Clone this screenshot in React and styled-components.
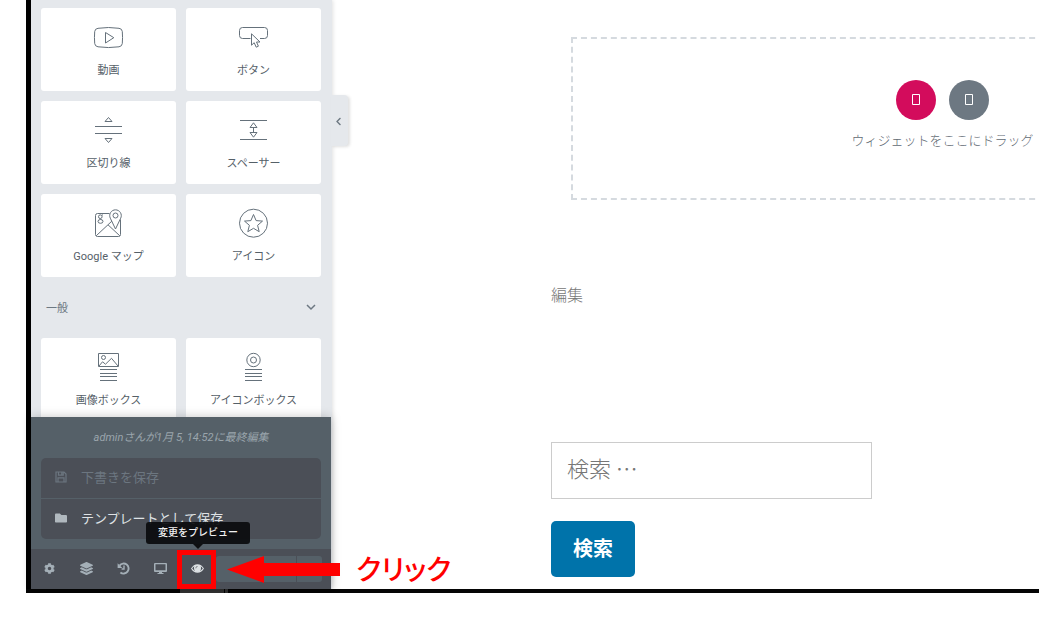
import React from "react";
import styled, { createGlobalStyle, css } from "styled-components";
import { FaCog, FaLayerGroup, FaFolder, FaChevronLeft } from "react-icons/fa";

const GlobalStyle = createGlobalStyle`
  *, *::before, *::after { box-sizing: border-box; }
  body {
    margin: 0;
    background: #fff;
    overflow: hidden;
    font-family: Roboto, "Noto Sans CJK JP", sans-serif;
  }
  button, input { font: inherit; }
`;

const Window = styled.div`
  display: flex;
  flex-direction: column;
  height: calc(100vh - 34px);
  margin-left: 26px;
  border-left: 5px solid #000;
`;

const Editor = styled.div`
  flex: 1;
  min-height: 0;
  display: flex;
`;

const Panel = styled.aside`
  position: relative;
  z-index: 1;
  flex: none;
  width: 300px;
  display: flex;
  flex-direction: column;
  background: #e5e8ec;
  box-shadow: 1px 0 0 #e5e8ec, 2px 0 4px rgba(0, 0, 0, 0.12);
`;

const Widgets = styled.div`
  flex: 1;
  min-height: 0;
  overflow: hidden;
  padding: 8px 10px 0;
`;

const WidgetGrid = styled.div`
  display: grid;
  grid-template-columns: 1fr 1fr;
  gap: 10px;
`;

const Card = styled.button`
  height: 83px;
  padding: 14px 0 0;
  border: 0;
  border-radius: 3px;
  background: #fff;
  color: #556068;
  display: flex;
  flex-direction: column;
  align-items: center;
  gap: 10px;
  font-size: 11px;
  line-height: 16px;
`;

const Drawing = styled.svg`
  display: block;
  width: 31px;
  height: 31px;
  fill: none;
  stroke: #65717b;
  stroke-width: 1;
`;

const CategoryTitle = styled.button`
  width: 100%;
  height: 61px;
  padding: 0 5px 2px;
  border: 0;
  background: none;
  color: #6d7882;
  display: flex;
  align-items: center;
  justify-content: space-between;
  font-size: 11px;
`;

const Footer = styled.footer`
  position: relative;
  background: #4b4f57;
  box-shadow: 0 0 10px rgba(0, 0, 0, 0.22);
`;

const SaveMenu = styled.div`
  padding: 11px 10px 10px;
  background: #556068;
`;

const LastEdited = styled.p`
  margin: 0 0 10px;
  color: #9aa5ac;
  font-size: 11px;
  font-style: italic;
  line-height: 20px;
  text-align: center;
`;

const MenuList = styled.div`
  display: flex;
  flex-direction: column;
  gap: 1px;
  border-radius: 5px;
  overflow: hidden;
`;

const MenuItem = styled.button`
  height: 40px;
  padding: 0 14px 3px;
  border: 0;
  background: #4b4f57;
  color: ${(p) => (p.disabled ? "#6c7680" : "#dfe2e5")};
  display: flex;
  align-items: center;
  gap: 14px;
  font-size: 13px;
  text-align: left;

  svg {
    width: 12px;
    height: 12px;
    color: ${(p) => (p.disabled ? "#6c7680" : "#b0b8be")};
  }
`;

const Tools = styled.div`
  height: 40px;
  padding-right: 9px;
  display: flex;
  align-items: center;
`;

const ToolButton = styled.button`
  position: relative;
  flex: none;
  width: 37px;
  height: 40px;
  padding: 0 0 1px;
  border: 0;
  background: none;
  color: ${(p) => (p.$active ? "#dde1e4" : "#a4afb7")};
  display: grid;
  place-items: center;

  > svg { width: 13px; height: 13px; }
  > ${() => SmallIcon} { width: 11px; height: 11px; }
`;

const SmallIcon = styled(FaCog)`
  display: block;
`;

const publishPart = css`
  height: 26px;
  border: 0;
  background: #556068;
`;

const Publish = styled.button`
  ${publishPart}
  flex: 1;
  border-radius: 3px 0 0 3px;
`;

const PublishOptions = styled.button`
  ${publishPart}
  width: 25px;
  margin-left: 1px;
  border-radius: 0 3px 3px 0;
`;

const Tooltip = styled.span`
  position: absolute;
  bottom: 45px;
  left: -33px;
  width: 104px;
  border-radius: 3px;
  background: rgba(10, 11, 13, 0.92);
  color: #f1f1f1;
  font-size: 10px;
  font-weight: 500;
  line-height: 22px;
  text-align: center;

  &::after {
    content: "";
    position: absolute;
    top: 100%;
    left: 47px;
    border: 5px solid transparent;
    border-top-color: #0e0f11;
    border-bottom: 0;
  }
`;

const Highlight = styled.span`
  position: absolute;
  inset: 1px 0 0 -2px;
  border: 5px solid #f00;
`;

const Callout = styled.div`
  position: absolute;
  z-index: 2;
  left: 196px;
  bottom: 0;
  height: 40px;
  display: flex;
  align-items: center;
  gap: 16px;
  color: #f00;
  font-size: 28px;
  font-weight: 500;
  line-height: 40px;
  font-feature-settings: "palt";
  white-space: nowrap;
  pointer-events: none;

  svg { display: block; fill: currentColor; }
  span { padding-top: 3px; }
`;

const CollapseHandle = styled.button`
  position: absolute;
  top: 95px;
  left: 100%;
  width: 17px;
  height: 51px;
  padding: 1px 2px 0 0;
  border: 0;
  border-radius: 0 4px 4px 0;
  background: #e5e8ec;
  box-shadow: 2px 1px 3px rgba(0, 0, 0, 0.12);
  color: #6d7882;
  display: grid;
  place-items: center;
`;

const Canvas = styled.main`
  flex: 1;
  min-width: 0;
  overflow: hidden;
  padding: 37px 0 0 220px;
`;

const Section = styled.section`
  width: 783px;
  padding: 0 20px;
`;

const DropZone = styled.div`
  height: 163px;
  border: 2px dashed #d5dadf;
  display: flex;
  flex-direction: column;
  align-items: center;
  padding-top: 41px;
  gap: 10px;
  color: #5f6a73;
  font-size: 13px;
  font-weight: 300;
  line-height: 21px;
`;

const AddButtons = styled.div`
  display: flex;
  gap: 13px;
`;

const AddButton = styled.button`
  width: 40px;
  height: 40px;
  padding: 0;
  border: 0;
  border-radius: 50%;
  background: ${(p) => p.$tone};
  display: grid;
  place-items: center;
`;

const EditLink = styled.a`
  display: block;
  width: max-content;
  margin-top: 84px;
  color: #767676;
  font-size: 16px;
  font-weight: 300;
  line-height: 24px;
  text-decoration: none;
`;

const SearchForm = styled.form`
  margin-top: 134px;
  display: flex;
  flex-direction: column;
  align-items: flex-start;
  gap: 22px;
`;

const SearchInput = styled.input`
  width: 321px;
  height: 57px;
  padding: 0 15px 8px;
  border: 1px solid #ccc;
  border-radius: 0;
  background: #fff;
  font-size: 22px;
  font-weight: 300;
  font-family: "Noto Sans CJK JP", sans-serif;

  &::placeholder { color: #767676; opacity: 1; }
`;

const SearchButton = styled.button`
  height: 56px;
  padding: 0 22px 3px;
  border: 0;
  border-radius: 5px;
  background: #0073aa;
  color: #fff;
  font-size: 20px;
  font-weight: 700;
`;

const BottomEdge = styled.div`
  flex: none;
  height: 4px;
  margin-left: -5px;
  padding-left: 154px;
  background: #050505;
  display: flex;
  gap: 1px;
`;

const EdgeMark = styled.span`
  width: ${(p) => p.$width}px;
  background: #333;
`;

const VideoIcon = () => (
  <Drawing viewBox="0 0 31 31">
    <path d="M5 6.3Q15.5 4.7 26 6.3Q29 6.6 29.3 9.5Q29.8 15.5 29.3 21.5Q29 24.4 26 24.8Q15.5 26.3 5 24.8Q2 24.4 1.7 21.5Q1.2 15.5 1.7 9.5Q2 6.6 5 6.3Z" />
    <path d="M12.5 10.5L20.8 15.7L12.5 21Z" />
  </Drawing>
);

const ButtonIcon = () => (
  <Drawing viewBox="0 0 31 31">
    <path d="M12.5 16.5H4.5Q1.5 16.5 1.5 13.5V8.5Q1.5 5.5 4.5 5.5H26.5Q29.5 5.5 29.5 8.5V13.5Q29.5 16.5 26.5 16.5H22" />
    <path d="M13.5 11.8V23.2L16.2 20.7L18.2 25.2L20.4 24.2L18.5 20H22Z" />
  </Drawing>
);

const DividerIcon = () => (
  <Drawing viewBox="0 0 31 31">
    <path d="M2 11.5H29M2 18.5H29M12 6.5L15.5 2.5L19 6.5ZM12 23.5H19L15.5 27.5Z" />
  </Drawing>
);

const SpacerIcon = () => (
  <Drawing viewBox="0 0 31 31">
    <path d="M2 5.5H29M2 24.5H29M15.5 12.5V17.5M12 12.5L15.5 7.8L19 12.5ZM12 17.5H19L15.5 22.2Z" />
  </Drawing>
);

const MapIcon = () => (
  <Drawing viewBox="0 0 31 31">
    <path d="M16.5 5.5H4.5Q2.5 5.5 2.5 7.5V26.5Q2.5 28.5 4.5 28.5H25.5Q27.5 28.5 27.5 26.5V11.5" />
    <path d="M22.5 21L17.3 10.2A5.8 5.8 0 1 1 27.7 10.2Z" />
    <circle cx="22.5" cy="7.5" r="2.5" />
    <path d="M3.2 27.8L18.8 13.2M15 16.8L26.8 27.8" />
    <circle cx="7.3" cy="8.7" r="1.8" />
    <ellipse cx="7.5" cy="13.4" rx="2.5" ry="1.9" />
    <path d="M8.6 7.3L9.9 6.8M7 10.5L8 11.5" />
  </Drawing>
);

const StarIcon = () => (
  <Drawing viewBox="0 0 31 31">
    <circle cx="15.5" cy="15.2" r="14" />
    <path d="M15.5 6.5L18.1 12.6L24.5 13.1L19.6 17.3L21.2 23.7L15.5 20.3L9.8 23.7L11.4 17.3L6.5 13.1L12.9 12.6Z" />
  </Drawing>
);

const ImageBoxIcon = () => (
  <Drawing viewBox="0 0 31 31">
    <path d="M5.5 1.5H25.5V14.5H5.5ZM7 17.5H24M7 21.5H24M7 24.5H24M7 28.5H24" />
    <circle cx="10.5" cy="5.5" r="2" />
    <path d="M6 14L9.5 9.8L12.5 12.2L18.5 6.3L25 14" />
  </Drawing>
);

const IconBoxIcon = () => (
  <Drawing viewBox="0 0 31 31">
    <circle cx="15.5" cy="8" r="6.7" />
    <circle cx="15.5" cy="8" r="3" />
    <path d="M7 17.5H24M7 21.5H24M7 24.5H24M7 28.5H24" />
  </Drawing>
);

const SaveIcon = () => (
  <svg viewBox="0 0 12 12" fill="none" stroke="currentColor" strokeWidth="1.2">
    <path d="M1 1H9L11 3V11H1ZM3.5 1V4.2H8.2V1M3 11V6.8H9V11M6.8 1.6V3.4" />
  </svg>
);

const HistoryIcon = () => (
  <svg viewBox="0 0 13 13" fill="none" stroke="currentColor" strokeWidth="1.9">
    <path d="M2.6 3.6A5 5 0 1 1 3.4 10.4" />
    <path d="M7 3.6V7H4.6" strokeWidth="1.4" />
    <path d="M0.6 1.2V6H5.4Z" fill="currentColor" stroke="none" />
  </svg>
);

const DesktopIcon = () => (
  <svg viewBox="0 0 13 13">
    <path
      fill="currentColor"
      fillRule="evenodd"
      d="M1 1H12Q13 1 13 2V9Q13 10 12 10H8V11H9.5V12H3.5V11H5V10H1Q0 10 0 9V2Q0 1 1 1ZM1.5 2.3V8.2H11.5V2.3Z"
    />
  </svg>
);

const EyeIcon = () => (
  <svg viewBox="0 0 13 13">
    <path
      fill="currentColor"
      fillRule="evenodd"
      d="M0 6.5Q2.6 2.2 6.5 2.2T13 6.5Q10.4 10.8 6.5 10.8T0 6.5ZM1.2 6.5Q3.3 9.7 6.5 9.7T11.8 6.5Q11 5.1 9.6 4.2Q10.2 5.2 10 6.3A3.5 3.5 0 0 1 3 6.3Q2.8 5.2 3.4 4.2Q2 5.1 1.2 6.5ZM4.4 6.3H5.2Q5.2 4.7 6.7 4.6V3.9Q4.5 4 4.4 6.3Z"
    />
  </svg>
);

const ChevronDown = () => (
  <svg width="10" height="10" viewBox="0 0 10 10" fill="none" stroke="currentColor" strokeWidth="1.5">
    <path d="M1 3L5 7L9 3" />
  </svg>
);

const Tofu = () => (
  <svg width="10" height="12" viewBox="0 0 10 12" fill="none" stroke="#fff">
    <path d="M1.5 0.5H8.5V10.5H1.5Z" />
  </svg>
);

const basicWidgets = [
  ["動画", VideoIcon],
  ["ボタン", ButtonIcon],
  ["区切り線", DividerIcon],
  ["スペーサー", SpacerIcon],
  ["Google マップ", MapIcon],
  ["アイコン", StarIcon],
];

const generalWidgets = [
  ["画像ボックス", ImageBoxIcon],
  ["アイコンボックス", IconBoxIcon],
];

const WidgetCards = ({ items }) => (
  <WidgetGrid>
    {items.map(([label, Icon]) => (
      <Card key={label} type="button">
        <Icon />
        {label}
      </Card>
    ))}
  </WidgetGrid>
);

export default function App() {
  return (
    <>
      <GlobalStyle />
      <Window>
        <Editor>
          <Panel>
            <Widgets>
              <WidgetCards items={basicWidgets} />
              <CategoryTitle type="button">
                一般
                <ChevronDown />
              </CategoryTitle>
              <WidgetCards items={generalWidgets} />
            </Widgets>
            <Footer>
              <SaveMenu>
                <LastEdited>adminさんが1月 5, 14:52に最終編集</LastEdited>
                <MenuList>
                  <MenuItem type="button" disabled>
                    <SaveIcon />
                    下書きを保存
                  </MenuItem>
                  <MenuItem type="button">
                    <FaFolder />
                    テンプレートとして保存
                  </MenuItem>
                </MenuList>
              </SaveMenu>
              <Tools>
                <ToolButton type="button" aria-label="設定"><SmallIcon /></ToolButton>
                <ToolButton type="button" aria-label="ナビゲーター"><FaLayerGroup /></ToolButton>
                <ToolButton type="button" aria-label="履歴"><HistoryIcon /></ToolButton>
                <ToolButton type="button" aria-label="レスポンシブモード"><DesktopIcon /></ToolButton>
                <ToolButton type="button" $active>
                  <EyeIcon />
                  <Tooltip>変更をプレビュー</Tooltip>
                  <Highlight />
                </ToolButton>
                <Publish type="button" aria-label="公開" />
                <PublishOptions type="button" aria-label="保存オプション" />
              </Tools>
              <Callout>
                <svg width="113" height="28" viewBox="0 0 113 28">
                  <path d="M0 14.5L37 1V8H113V21H37V28Z" />
                </svg>
                <span>クリック</span>
              </Callout>
            </Footer>
            <CollapseHandle type="button" aria-label="パネルを隠す">
              <FaChevronLeft size={9} />
            </CollapseHandle>
          </Panel>
          <Canvas>
            <Section>
              <DropZone>
                <AddButtons>
                  <AddButton type="button" aria-label="新規セクションを追加" $tone="#d30c5c"><Tofu /></AddButton>
                  <AddButton type="button" aria-label="テンプレートを追加" $tone="#6d7882"><Tofu /></AddButton>
                </AddButtons>
                ウィジェットをここにドラッグ
              </DropZone>
            </Section>
            <EditLink href="#edit">編集</EditLink>
            <SearchForm role="search">
              <SearchInput type="search" aria-label="検索" placeholder="検索 …" />
              <SearchButton type="submit">検索</SearchButton>
            </SearchForm>
          </Canvas>
        </Editor>
        <BottomEdge>
          <EdgeMark $width={44} />
          <EdgeMark $width={3} />
        </BottomEdge>
      </Window>
    </>
  );
}
